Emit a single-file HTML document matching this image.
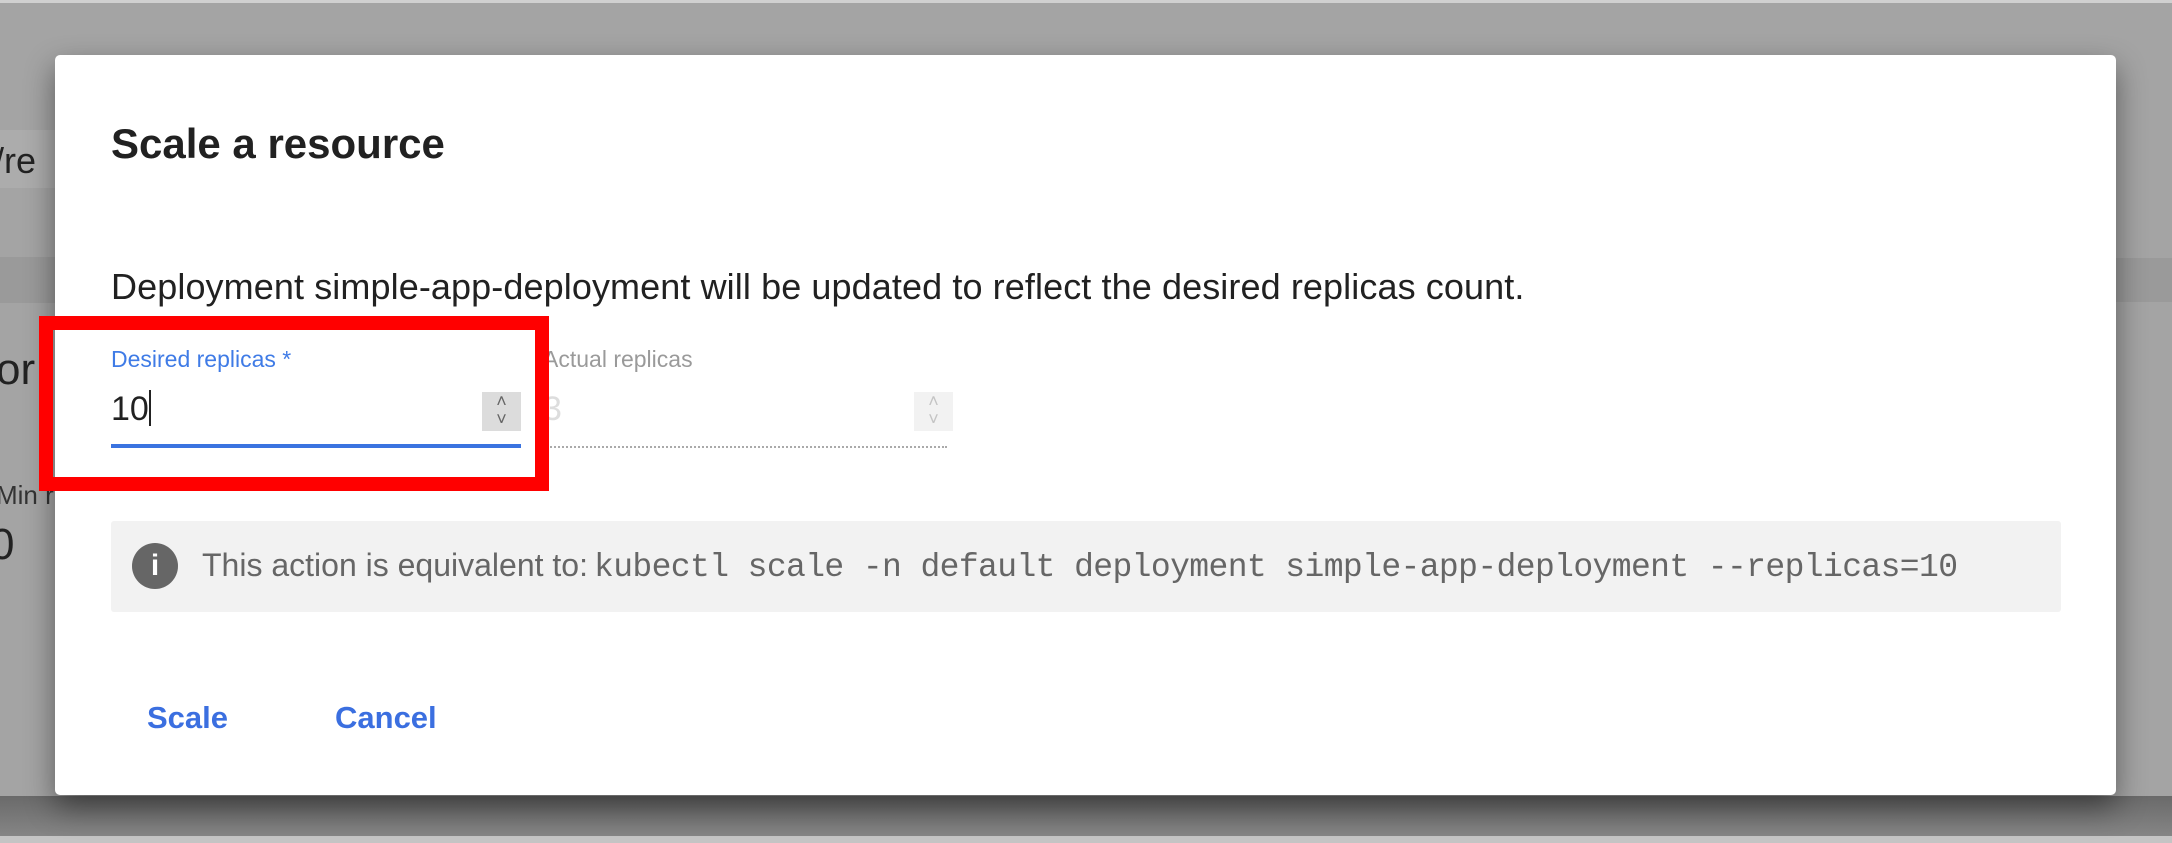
<!DOCTYPE html>
<html><head><meta charset="utf-8"><style>
html,body{margin:0;padding:0}
body{width:2172px;height:843px;position:relative;overflow:hidden;background:#a4a4a4;font-family:"Liberation Sans",Arial,sans-serif}
.abs{position:absolute}
.dialog{left:55px;top:55px;width:2061px;height:740px;background:#fff;border-radius:5px;box-shadow:0 12px 30px rgba(0,0,0,.45)}
</style></head><body>
<div class="abs" style="left:0;top:0;width:2172px;height:3px;background:#d0d0d0"></div>
<div class="abs" style="left:0;top:130px;width:60px;height:58px;background:#acacac"></div>
<div class="abs" style="left:0;top:257px;width:60px;height:46px;background:#9a9a9a"></div>
<div class="abs" style="left:2116px;top:258px;width:56px;height:44px;background:#9a9a9a"></div>
<div class="abs" style="left:0;top:796px;width:2172px;height:40px;background:linear-gradient(#6a6a6a,#858585)"></div>
<div class="abs" style="left:0;top:836px;width:2172px;height:7px;background:#c4c4c4"></div>
<div class="abs" style="left:-6px;top:140px;font-size:36px;color:#222">/re</div>
<div class="abs" style="left:-4px;top:345px;font-size:44px;color:#222">or</div>
<div class="abs" style="left:-4px;top:480px;font-size:26px;color:#333">Min r</div>
<div class="abs" style="left:-10px;top:520px;font-size:44px;color:#222">0</div>

<div class="abs dialog"></div>
<div class="abs" style="left:111px;top:120px;font-size:42px;font-weight:bold;color:#212121">Scale a resource</div>
<div class="abs" style="left:111px;top:266px;font-size:36px;color:#212121;white-space:nowrap;letter-spacing:0.1px">Deployment simple-app-deployment will be updated to reflect the desired replicas count.</div>

<div class="abs" style="left:111px;top:346px;font-size:23px;color:#3f7be6">Desired replicas *</div>
<div class="abs" style="left:111px;top:390px;font-size:34px;color:#212121">10<span style="display:inline-block;width:2px;height:36px;background:#222;vertical-align:-6px"></span></div>
<div class="abs" style="left:482px;top:392px;width:39px;height:39px;background:#dcdcdc;color:#666;font-size:18px;line-height:18px;text-align:center">&#x2C4;<br>&#x2C5;</div>
<div class="abs" style="left:111px;top:444px;width:410px;height:4px;background:#3a73e0"></div>

<div class="abs" style="left:543px;top:346px;font-size:23px;color:#9a9a9a">Actual replicas</div>
<div class="abs" style="left:543px;top:390px;font-size:34px;color:#ddd">3</div>
<div class="abs" style="left:914px;top:392px;width:39px;height:39px;background:#f2f2f2;color:#c4c4c4;font-size:18px;line-height:18px;text-align:center">&#x2C4;<br>&#x2C5;</div>
<div class="abs" style="left:543px;top:446px;width:404px;height:0;border-top:2px dotted #aaa"></div>

<div class="abs" style="left:39px;top:316px;width:482px;height:147px;border:14px solid #ff0000"></div>

<div class="abs" style="left:111px;top:521px;width:1950px;height:91px;background:#f2f2f2;border-radius:3px"></div>
<div class="abs" style="left:132px;top:543px;width:46px;height:46px;border-radius:50%;background:#666;color:#fff;font-size:30px;font-weight:bold;text-align:center;line-height:46px">i</div>
<div class="abs" style="left:202px;top:547px;font-size:32px;color:#666;white-space:nowrap">This action is equivalent to:<span style="font-family:'Liberation Mono',monospace;font-size:33px;letter-spacing:-0.6px;margin-left:6px">kubectl scale -n default deployment simple-app-deployment --replicas=10</span></div>

<div class="abs" style="left:147px;top:700px;font-size:31px;font-weight:bold;color:#3b6fe0">Scale</div>
<div class="abs" style="left:335px;top:700px;font-size:31px;font-weight:bold;color:#3b6fe0">Cancel</div>
</body></html>
